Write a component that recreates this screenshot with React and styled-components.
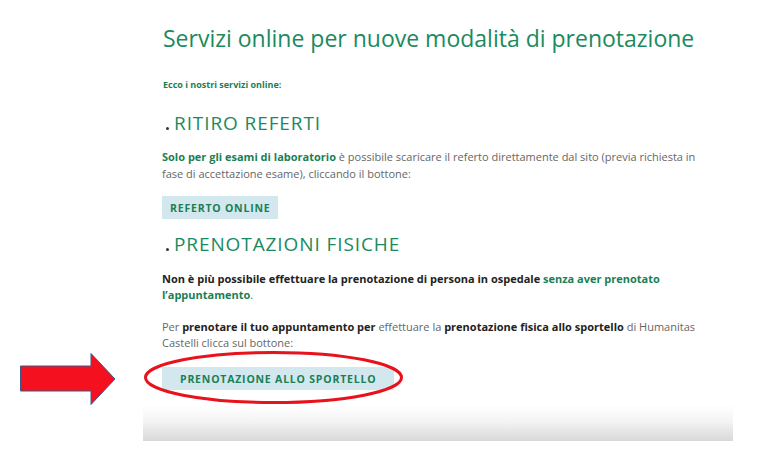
import React from "react";
import styled, { createGlobalStyle } from "styled-components";

const GlobalStyle = createGlobalStyle`
  html, body {
    margin: 0;
    padding: 0;
    background: #ffffff;
  }
  body {
    font-family: "Open Sans", "Liberation Sans", Arial, sans-serif;
    -webkit-font-smoothing: antialiased;
  }
`;

const Page = styled.div`
  width: 779px;
  height: 471px;
  overflow: hidden;
  padding: 24px 0 0 162px;
  box-sizing: border-box;
`;

const Content = styled.div`
  width: 560px;
`;

const Title = styled.h1`
  margin: 0 0 0 1px;
  font-size: 23px;
  line-height: 28px;
  font-weight: 400;
  color: #1b8a5f;
`;

const Intro = styled.p`
  margin: 26px 0 0 1px;
  font-size: 9px;
  line-height: 13px;
  font-weight: 700;
  color: #1a7f55;
`;

const SectionTitle = styled.h2`
  display: flex;
  align-items: baseline;
  margin: ${(p) => p.$top}px 0 0 4px;
  font-size: 19px;
  line-height: 22px;
  font-weight: 400;
  letter-spacing: 0.9px;
  color: #1b8a5f;
`;

const Dot = styled.span`
  display: inline-block;
  width: 3px;
  height: 3px;
  border-radius: 50%;
  background: #333;
  margin-right: 5px;
`;

const Text = styled.p`
  margin: ${(p) => p.$top}px 0 0;
  font-size: 11px;
  line-height: ${(p) => p.$lh || 17}px;
  color: #666;
`;

const Green = styled.strong`
  color: #1a7f55;
  font-weight: 700;
`;

const Dark = styled.strong`
  color: #222;
  font-weight: 700;
`;

const ActionRow = styled.div`
  position: relative;
  display: flex;
  margin-top: ${(p) => p.$top}px;
`;

const ActionButton = styled.a`
  display: flex;
  align-items: center;
  justify-content: center;
  height: 23px;
  padding: 0 ${(p) => p.$pad}px;
  background: #d3e7ef;
  color: #1a7f55;
  font-size: 10.5px;
  font-weight: 700;
  letter-spacing: 0.8px;
  text-decoration: none;
`;

const Ring = styled.svg`
  position: absolute;
  left: -18px;
  top: -16px;
  overflow: visible;
`;

const Arrow = styled.svg`
  position: absolute;
  left: -142px;
  top: -14px;
  overflow: visible;
`;

const Fade = styled.div`
  margin: 15px 0 0 -19px;
  width: 590px;
  height: 36px;
  background: linear-gradient(to bottom, #ffffff 0%, #f4f4f4 45%, #d8d8d8 100%);
`;

export default function App() {
  return (
    <>
      <GlobalStyle />
      <Page>
        <Content>
          <Title>Servizi online per nuove modalità di prenotazione</Title>
          <Intro>Ecco i nostri servizi online:</Intro>

          <SectionTitle $top={21}>
            <Dot />
            RITIRO REFERTI
          </SectionTitle>
          <Text $top={14}>
            <Green>Solo per gli esami di laboratorio</Green> è possibile scaricare il
            referto direttamente dal sito (previa richiesta in
            <br />
            fase di accettazione esame), cliccando il bottone:
          </Text>
          <ActionRow $top={14}>
            <ActionButton href="#" $pad={8}>REFERTO ONLINE</ActionButton>
          </ActionRow>

          <SectionTitle $top={14}>
            <Dot />
            PRENOTAZIONI FISICHE
          </SectionTitle>
          <Text $top={16} $lh={16}>
            <Dark>
              Non è più possibile effettuare la prenotazione di persona in ospedale
            </Dark>{" "}
            <Green>
              senza aver prenotato
              <br />
              l’appuntamento
            </Green>
            .
          </Text>
          <Text $top={16} $lh={16}>
            Per <Dark>prenotare il tuo appuntamento per</Dark> effettuare la{" "}
            <Dark>prenotazione fisica allo sportello</Dark> di Humanitas
            <br />
            Castelli clicca sul bottone:
          </Text>
          <ActionRow $top={16}>
            <ActionButton href="#" $pad={18}>PRENOTAZIONE ALLO SPORTELLO</ActionButton>
            <Ring width="259" height="53">
              <ellipse
                cx="129.5"
                cy="26.5"
                rx="128"
                ry="25"
                fill="none"
                stroke="#e8121c"
                strokeWidth="3"
              />
            </Ring>
            <Arrow width="96" height="52">
              <polygon
                points="0.5,13 71,13 71,0.5 95,26 71,51.5 71,38 0.5,38"
                fill="#f5101f"
                stroke="#3e5888"
                strokeWidth="1"
              />
            </Arrow>
          </ActionRow>
        </Content>
        <Fade />
      </Page>
    </>
  );
}
